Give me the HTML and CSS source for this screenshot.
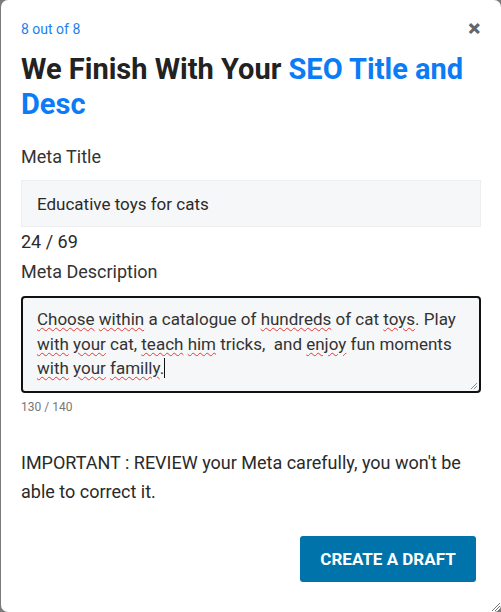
FILE: index.html
```html
<!DOCTYPE html>
<html>
<head>
<meta charset="utf-8">
<link rel="stylesheet" href="styles.css">
</head>
<body>
<div class="modal">
  <div class="top">
    <span class="step">8 out of 8</span>
    <span class="close">&#x2715;</span>
  </div>
  <h1 class="heading">We Finish With Your <span class="accent">SEO Title and Desc</span></h1>
  <div class="label">Meta Title</div>
  <div class="input">Educative toys for cats</div>
  <div class="count">24 / 69</div>
  <div class="label label-desc">Meta Description</div>
  <div class="textarea">
    <span class="sp">Choose</span> <span class="sp">within</span> a catalogue of <span class="sp">hundreds</span> of cat <span class="sp">toys</span>. Play <span class="sp">with</span> <span class="sp">your</span> cat, <span class="sp">teach</span> <span class="sp">him</span> tricks,&nbsp; and <span class="sp">enjoy</span> fun moments <span class="sp">with</span> <span class="sp">your</span> <span class="sp">familly</span>.<span class="caret"></span>
    <svg class="grip" width="8" height="8" viewBox="0 0 8 8"><path d="M7 1L1 7M7 4L4 7" stroke="#888" stroke-width="1"/></svg>
  </div>
  <div class="small-count">130 / 140</div>
  <p class="warn">IMPORTANT : REVIEW your Meta carefully, you won't be able to correct it.</p>
  <div class="actions">
    <button class="btn">CREATE A DRAFT</button>
  </div>
  <svg class="modal-grip" width="10" height="10" viewBox="0 0 10 10"><path d="M9 1L1 9M9 4L4 9M9 7L7 9" stroke="#777" stroke-width="1"/></svg>
</div>
</body>
</html>
```

FILE: styles.css
```css
html, body {
  margin: 0;
  padding: 0;
  height: 612px;
  overflow: hidden;
}
body {
  background: #7b7b7b;
  font-family: Roboto, "Liberation Sans", sans-serif;
}
.modal {
  position: relative;
  margin-left: 1px;
  width: 500px;
  height: 612px;
  background: #fff;
  border-radius: 7px;
  box-sizing: border-box;
  padding: 20px 20px 0 20px;
}
.top {
  display: flex;
  justify-content: space-between;
  align-items: center;
  height: 18px;
}
.step {
  color: #1a7ff0;
  font-size: 14px;
}
.close {
  color: #666;
  font-size: 15px;
  font-weight: bold;
  -webkit-text-stroke: 1px #666;
}
.heading {
  margin: 14px 0 0 0;
  font-size: 29px;
  line-height: 35px;
  font-weight: 700;
  color: #222;
}
.accent {
  color: #0b7cf5;
}
.label {
  margin-top: 24px;
  font-size: 18px;
  color: #333;
  line-height: 22px;
}
.input {
  margin-top: 12px;
  height: 47px;
  box-sizing: border-box;
  background: #f6f7f8;
  border: 1px solid #eceeef;
  padding: 0 15px;
  display: flex;
  align-items: center;
  font-size: 17px;
  color: #2a2a2a;
}
.count {
  font-size: 18px;
  color: #2a2a2a;
  line-height: 22px;
  margin-top: 4px;
}
.label-desc {
  margin-top: 8px;
}
.textarea {
  position: relative;
  margin-top: 13px;
  height: 97px;
  box-sizing: border-box;
  border: 2px solid #111;
  border-radius: 4px;
  background: #f6f7f8;
  padding: 9px 14px;
  font-size: 17px;
  line-height: 24.5px;
  color: #333;
}
.sp {
  text-decoration: underline wavy #e53935;
  text-decoration-thickness: 1px;
  text-underline-offset: 2px;
}
.caret {
  display: inline-block;
  width: 1px;
  height: 20px;
  background: #111;
  vertical-align: -4px;
}
.grip {
  position: absolute;
  right: 1px;
  bottom: 1px;
}
.small-count {
  margin-top: 7px;
  font-size: 12px;
  line-height: 14px;
  color: #777;
}
.warn {
  margin: 34px 0 0 0;
  font-size: 18px;
  line-height: 29px;
  color: #2a2a2a;
}
.actions {
  display: flex;
  justify-content: flex-end;
  margin-top: 30px;
  padding-right: 5px;
}
.btn {
  background: #0073aa;
  color: #fff;
  border: none;
  border-radius: 3px;
  width: 176px;
  height: 46px;
  font-family: Roboto, "Liberation Sans", sans-serif;
  font-weight: 700;
  font-size: 17px;
}
.modal-grip {
  position: absolute;
  right: 0;
  bottom: 0;
}
```
